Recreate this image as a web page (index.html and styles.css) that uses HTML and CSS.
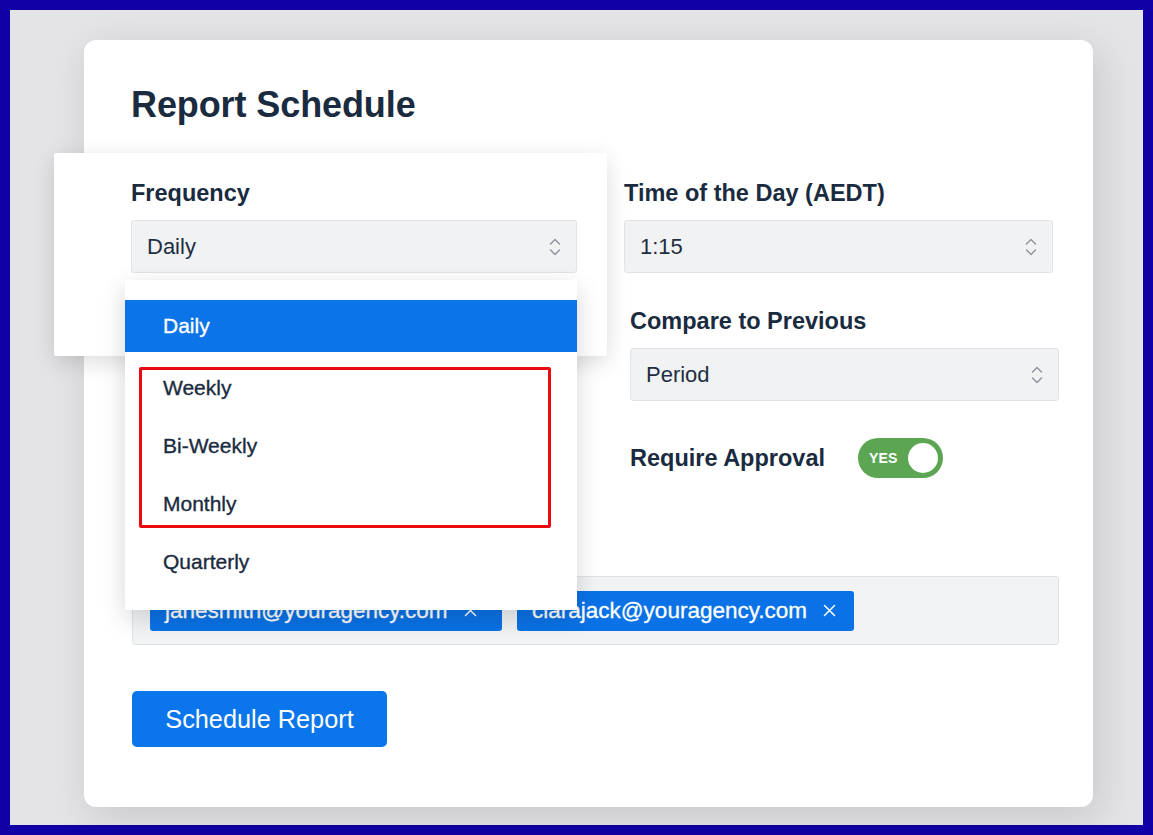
FILE: index.html
```html
<!DOCTYPE html>
<html lang="en">
<head>
<meta charset="utf-8">
<title>Report Schedule</title>
<link rel="stylesheet" href="styles.css">
</head>
<body>
<div class="stage">
  <div class="card">
    <h1 class="title">Report Schedule</h1>
    <div class="top-grid">
      <div class="field field-freq">
        <div class="lift"></div>
        <label class="label">Frequency</label>
        <div class="select">
          <span>Daily</span>
          <svg class="chev" width="14" height="22" viewBox="0 0 14 22"><path d="M2.5 8 L7 3.5 L11.5 8 M2.5 14 L7 18.5 L11.5 14" fill="none" stroke="#8d9299" stroke-width="1.4" stroke-linecap="round" stroke-linejoin="round"/></svg>
        </div>
        <ul class="menu">
          <li class="opt opt-active">Daily</li>
          <li class="opt">Weekly</li>
          <li class="opt">Bi-Weekly</li>
          <li class="opt">Monthly</li>
          <li class="opt">Quarterly</li>
          <div class="highlight"></div>
        </ul>
      </div>
      <div class="right-col">
        <div class="field">
          <label class="label">Time of the Day (AEDT)</label>
          <div class="select">
            <span>1:15</span>
            <svg class="chev" width="14" height="22" viewBox="0 0 14 22"><path d="M2.5 8 L7 3.5 L11.5 8 M2.5 14 L7 18.5 L11.5 14" fill="none" stroke="#8d9299" stroke-width="1.4" stroke-linecap="round" stroke-linejoin="round"/></svg>
          </div>
        </div>
        <div class="field field-shift field-compare">
          <label class="label">Compare to Previous</label>
          <div class="select">
            <span>Period</span>
            <svg class="chev" width="14" height="22" viewBox="0 0 14 22"><path d="M2.5 8 L7 3.5 L11.5 8 M2.5 14 L7 18.5 L11.5 14" fill="none" stroke="#8d9299" stroke-width="1.4" stroke-linecap="round" stroke-linejoin="round"/></svg>
          </div>
        </div>
        <div class="approval field-shift">
          <span class="label label-inline">Require Approval</span>
          <div class="toggle">
            <span class="toggle-text">YES</span>
            <span class="knob"></span>
          </div>
        </div>
      </div>
    </div>
    <div class="emails">
      <span class="chip chip-1">janesmith@youragency.com
        <svg class="x" width="13" height="13" viewBox="0 0 13 13"><path d="M1.5 1.5 L11.5 11.5 M11.5 1.5 L1.5 11.5" stroke="#fff" stroke-width="1.5" stroke-linecap="round"/></svg>
      </span>
      <span class="chip">clarajack@youragency.com
        <svg class="x" width="13" height="13" viewBox="0 0 13 13"><path d="M1.5 1.5 L11.5 11.5 M11.5 1.5 L1.5 11.5" stroke="#fff" stroke-width="1.5" stroke-linecap="round"/></svg>
      </span>
    </div>
    <button class="btn">Schedule Report</button>
  </div>
</div>
</body>
</html>
```

FILE: styles.css
```css
* { box-sizing: border-box; }
html, body { margin: 0; padding: 0; }
body {
  background: #1100a6;
  font-family: "Liberation Sans", Arial, sans-serif;
  color: #1a2b40;
  width: 1153px;
  height: 835px;
  padding: 10px;
}
.stage {
  width: 1133px;
  height: 815px;
  background: #e4e4e6;
  padding: 30px 50px 18px 74px;
}
.card {
  width: 1009px;
  height: 767px;
  background: #ffffff;
  border-radius: 12px;
  box-shadow: 6px 10px 40px rgba(0, 0, 0, 0.13);
  padding: 43px 34px 0 47px;
}
.title {
  margin: 0;
  font-size: 36px;
  line-height: 43px;
  font-weight: 700;
  color: #1a2b40;
  letter-spacing: -0.1px;
}
.top-grid {
  display: flex;
  align-items: flex-start;
  gap: 47px;
  margin-top: 53px;
  height: 397px;
}
.field { position: relative; display: flex; flex-direction: column; }
.field-freq { width: 446px; z-index: 2; }
.right-col { width: 435px; display: flex; flex-direction: column; }
.right-col .field .select { width: 429px; }
.field-shift { margin-left: 6px; }
.field-compare { margin-top: 34px; }
.label {
  font-size: 23.5px;
  line-height: 29px;
  font-weight: 700;
  color: #1a2b40;
  margin-bottom: 12px;
  position: relative;
}
.select {
  position: relative;
  height: 53px;
  background: #f1f2f4;
  border: 1px solid #e1e3e7;
  border-radius: 3px;
  display: flex;
  align-items: center;
  justify-content: space-between;
  padding: 0 14px 0 15px;
  font-size: 22px;
  color: #1f2e40;
}
.chev { display: block; }
.lift {
  position: absolute;
  left: -77px;
  top: -26px;
  right: -30px;
  bottom: -83px;
  background: #ffffff;
  box-shadow: 0 6px 22px rgba(0, 0, 0, 0.14);
  border-radius: 2px;
}
.menu {
  position: absolute;
  left: -6px;
  right: 0;
  top: 101px;
  height: 330px;
  margin: 0;
  padding: 20px 0 0 0;
  list-style: none;
  background: #ffffff;
  box-shadow: 0 8px 24px rgba(0, 0, 0, 0.16);
}
.opt {
  height: 58px;
  display: flex;
  align-items: center;
  padding-left: 38px;
  font-size: 21px;
  color: #1a2b40;
  -webkit-text-stroke: 0.35px #1a2b40;
}
.opt-active {
  height: 52px;
  margin-bottom: 7px;
  background: #0a74e8;
  color: #ffffff;
  -webkit-text-stroke: 0.35px #ffffff;
}
.highlight {
  position: absolute;
  left: 14px;
  top: 87px;
  width: 412px;
  height: 161px;
  border: 3px solid #ea0a0f;
  border-radius: 2px;
}
.approval {
  display: flex;
  align-items: center;
  margin-top: 37px;
  height: 40px;
}
.label-inline { margin-bottom: 0; font-size: 23.5px; }
.toggle {
  margin-left: 33px;
  width: 85px;
  height: 40px;
  border-radius: 20px;
  background: #5ca653;
  display: flex;
  align-items: center;
  justify-content: space-between;
  padding: 0 5px 0 11px;
}
.toggle-text {
  color: #ffffff;
  font-size: 14px;
  font-weight: 700;
  letter-spacing: 0.2px;
}
.knob {
  width: 30px;
  height: 30px;
  border-radius: 50%;
  background: #ffffff;
}
.emails {
  margin-left: 1px;
  width: 927px;
  height: 69px;
  background: #f2f3f5;
  border: 1px solid #e0e2e6;
  border-radius: 3px;
  display: flex;
  align-items: center;
  gap: 15px;
  padding: 0 17px;
}
.chip {
  height: 40px;
  background: #0a72e6;
  border-radius: 3px;
  color: #ffffff;
  font-size: 22.5px;
  display: flex;
  align-items: center;
  padding: 0 18px 0 15px;
  gap: 16px;
  -webkit-text-stroke: 0.3px #ffffff;
}
.chip-1 { width: 352px; }
.x { display: block; flex: none; }
.btn {
  margin-top: 46px;
  margin-left: 1px;
  width: 255px;
  height: 56px;
  border: none;
  border-radius: 5px;
  background: #0b76ec;
  color: #ffffff;
  font-family: "Liberation Sans", Arial, sans-serif;
  font-size: 25.3px;
  padding: 0;
}
```
